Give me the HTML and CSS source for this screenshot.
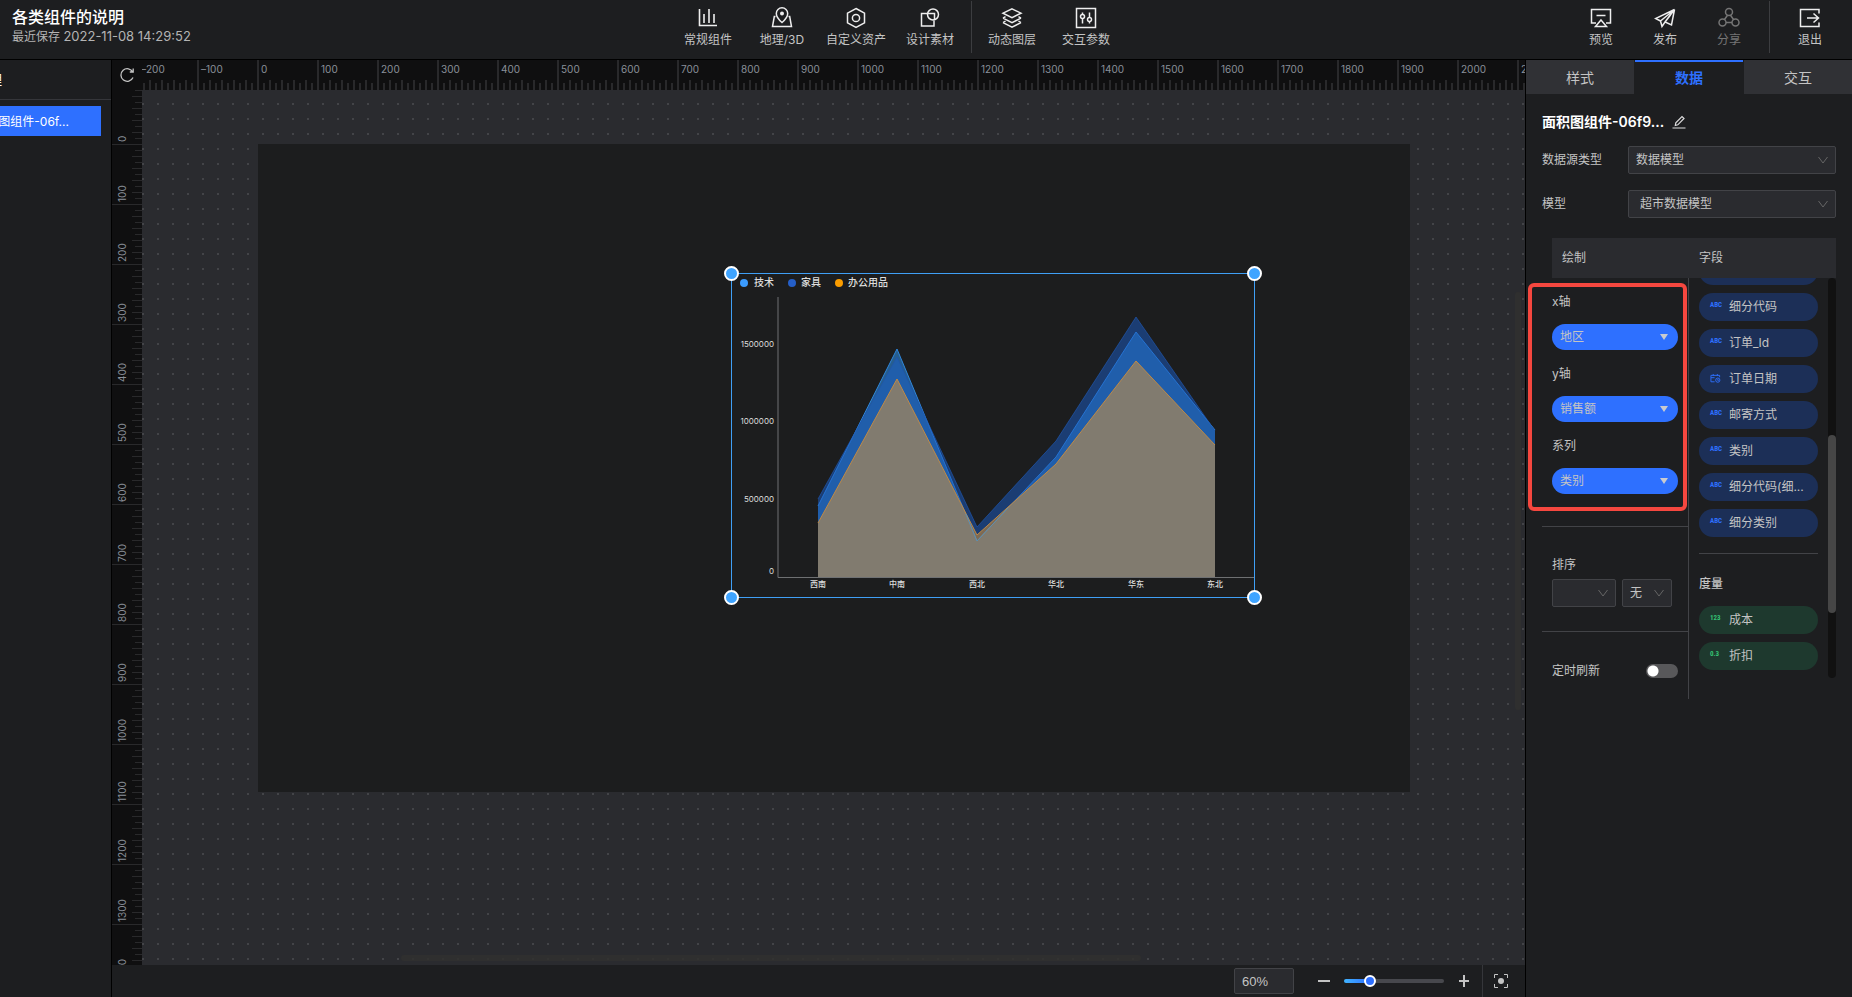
FILE: index.html
```html
<!DOCTYPE html>
<html lang="zh-CN">
<head>
<meta charset="utf-8">
<title>各类组件的说明</title>
<link rel="stylesheet" href="styles.css">
</head>
<body>
<header class="topbar">
  <div class="doc">
    <h1 class="doc-title">各类组件的说明</h1>
    <p class="doc-saved">最近保存 <time>2022-11-08 14:29:52</time></p>
  </div>
  <nav class="tools">
    <button class="tool"><svg viewBox="0 0 22 22"><path d="M2.500 2v16.500h17.500M7 7v9M12 2v14M17 7v9" stroke-width="1.600"/></svg>常规组件</button>
    <button class="tool"><svg viewBox="0 0 22 22"><path d="M4.500 9.500H3.300L1.500 19.500h19l-1.800-10h-1.200"/><path d="M11 15.500C7.500 12.500 5.300 9.500 5.300 6.500a5.700 5.700 0 0 1 11.400 0c0 3-2.200 6-5.700 9z"/><circle cx="11" cy="6.500" r="2" fill="currentColor" stroke="none"/></svg>地理/3D</button>
    <button class="tool"><svg viewBox="0 0 22 22"><path d="M11 1.500l8.500 4.700v9.600L11 20.500l-8.500-4.700V6.200z"/><circle cx="11" cy="11" r="3.600"/></svg>自定义资产</button>
    <button class="tool"><svg viewBox="0 0 22 22"><path d="M8 6.500H2.500v12.500h12.500v-5.500M8 6.500h7.500V13"/><circle cx="14" cy="7.500" r="5.500"/></svg>设计素材</button>
    <span class="divider"></span>
    <button class="tool"><svg viewBox="0 0 22 22"><path d="M11 1.800l9 4.400-9 4.400-9-4.400zM2 11.200l9 4.400 9-4.400M2 15.700l9 4.400 9-4.400M2 11.200l2.500-1.500M20 11.200l-2.500-1.500M2 15.700l2.500-1.500M20 15.700l-2.500-1.500"/></svg>动态图层</button>
    <button class="tool"><svg viewBox="0 0 22 22"><path d="M1.500 1.500h19v19h-19zM7.500 5.500v2M7.500 11.500v5M14.500 5.500v5M14.500 14.500v2"/><circle cx="7.500" cy="9.500" r="2"/><circle cx="14.500" cy="12.500" r="2"/></svg>交互参数</button>
  </nav>
  <nav class="actions">
    <button class="tool"><svg viewBox="0 0 22 22"><path d="M6 16H1.500V2.500h19V16H16M6.500 8.500h9"/><path d="M11 13l5.500 6.500h-11z"/></svg>预览</button>
    <button class="tool"><svg viewBox="0 0 22 22"><path d="M20.500 2.500L1.500 11.500l5 2.500M20.500 2.500L17.500 18l-6.500-3zM20 3L6.500 14l1.500 5.500 3-4.500 5.500-7"/></svg>发布</button>
    <button class="tool off"><svg viewBox="0 0 22 22"><circle cx="11" cy="5" r="3.500"/><circle cx="4.500" cy="15.500" r="3.500"/><circle cx="17.500" cy="15.500" r="3.500"/><path d="M9.500 8.300L6.500 12.500M12.500 8.300l3 4.200M8 15.500h6"/></svg>分享</button>
    <span class="divider"></span>
    <button class="tool"><svg viewBox="0 0 22 22"><path d="M20 6.500V2.500H1.500v17H20v-4M8 11h12M14.500 6.500L19.500 11l-5 4.500"/></svg>退出</button>
  </nav>
</header>

<div class="workspace">
  <aside class="layers">
    <h2 class="layers-title"><span>图层管理</span></h2>
    <button class="layer"><span>面积图组件-06f...</span></button>
  </aside>

  <main class="editor">
    <div class="board">
      <button class="reset" aria-label="重置"><svg viewBox="0 0 16 16"><path d="M13.800 5A6.300 6.300 0 1 0 14 10.500M14.200 1.500V5h-3.400"/></svg></button>
      <div class="ruler-x"><div class="marks-x"><span>–200</span><span>–100</span><span>0</span><span>100</span><span>200</span><span>300</span><span>400</span><span>500</span><span>600</span><span>700</span><span>800</span><span>900</span><span>1000</span><span>1100</span><span>1200</span><span>1300</span><span>1400</span><span>1500</span><span>1600</span><span>1700</span><span>1800</span><span>1900</span><span>2000</span><span>2100</span></div></div>
      <div class="ruler-y"><div class="marks-y"><span>0</span><span>100</span><span>200</span><span>300</span><span>400</span><span>500</span><span>600</span><span>700</span><span>800</span><span>900</span><span>1000</span><span>1100</span><span>1200</span><span>1300</span><span>1400</span></div></div>
      <div class="canvas">
        <div class="stage">
          <div class="selection">
            <svg class="chart" viewBox="0 0 524 325">
              <g class="legend">
                <circle cx="13" cy="10" r="4" fill="#3b9cff"/><text x="23" y="13">技术</text>
                <circle cx="61" cy="10" r="4" fill="#255fc8"/><text x="70" y="13">家具</text>
                <circle cx="108" cy="10" r="4" fill="#fa9d00"/><text x="117" y="13">办公用品</text>
              </g>
              <path class="axis" d="M47 24V304.500H524"/>
              <g class="ylabels"><text x="43" y="74">1500000</text><text x="43" y="151">1000000</text><text x="43" y="229">500000</text><text x="43" y="301">0</text></g>
              <path class="tech-fill" d="M87 233L166 76L246 268L325 184L405 59L484 157V304H87z"/>
              <path class="tech-line" d="M87 233L166 76L246 268L325 184L405 59L484 157"/>
              <path class="home-fill" d="M87 226L166 84L246 254L325 168L405 44L484 158V304H87z"/>
              <path class="home-line" d="M87 226L166 84L246 254L325 168L405 44L484 158"/>
              <path class="office-fill" d="M87 250L166 106L246 262L325 191L405 88L484 172V304H87z"/>
              <path class="office-line" d="M87 250L166 106L246 262L325 191L405 88L484 172"/>
              <path class="tech-dip" d="M235 241L246 268L277 235"/>
              <g class="xlabels"><text x="87" y="314">西南</text><text x="166" y="314">中南</text><text x="246" y="314">西北</text><text x="325" y="314">华北</text><text x="405" y="314">华东</text><text x="484" y="314">东北</text></g>
            </svg>
            <i class="handle nw"></i><i class="handle ne"></i><i class="handle sw"></i><i class="handle se"></i>
          </div>
        </div>
        <i class="bar-x"></i><i class="bar-y"></i>
      </div>
    </div>
    <footer class="zoombar">
      <input class="zoom-value" type="text" value="60%" aria-label="缩放比例">
      <button class="step" aria-label="缩小"><svg viewBox="0 0 14 14"><path d="M1 7h12"/></svg></button>
      <input class="zoom-range" type="range" min="0" max="100" value="23" aria-label="缩放">
      <button class="step plus" aria-label="放大"><svg viewBox="0 0 14 14"><path d="M2 7h10M7 1v12"/></svg></button>
      <button class="fit" aria-label="适应画布"><svg viewBox="0 0 16 16"><path d="M1.500 5V1.500H5M11 1.500h3.500V5M14.500 11v3.500H11M5 14.500H1.500V11"/><circle cx="8" cy="8" r="3" fill="currentColor" stroke="none"/></svg></button>
    </footer>
  </main>

  <aside class="panel">
    <div class="tabs" role="tablist">
      <button class="tab" role="tab">样式</button>
      <button class="tab active" role="tab" aria-selected="true">数据</button>
      <button class="tab" role="tab">交互</button>
    </div>
    <div class="panel-body">
      <div class="name"><h2>面积图组件-06f9...</h2><button class="edit" aria-label="编辑"><svg viewBox="0 0 14 14"><path d="M.5 13h13M3.300 10.500l.5-2.700L10 1.500l2 2L5.800 9.800z"/></svg></button></div>
      <div class="row"><label for="src">数据源类型</label><select id="src" class="select"><option>数据模型</option></select></div>
      <div class="row"><label for="model">模型</label><select id="model" class="select indent"><option>超市数据模型</option></select></div>
      <div class="mapping">
        <div class="mapping-head"><span>绘制</span><span>字段</span></div>
        <div class="mapping-cols">
          <div class="draw">
            <div class="axes">
              <label for="fx">x轴</label><select id="fx" class="pick"><option>地区</option></select>
              <label for="fy">y轴</label><select id="fy" class="pick"><option>销售额</option></select>
              <label for="fs">系列</label><select id="fs" class="pick"><option>类别</option></select>
            </div>
            <div class="sort">
              <span>排序</span>
              <div class="sort-row"><select class="select by" aria-label="排序字段"><option></option></select><select class="select dir" aria-label="排序方式"><option>无</option></select></div>
            </div>
            <div class="refresh"><label for="auto">定时刷新</label><input id="auto" class="switch" type="checkbox" role="switch"></div>
          </div>
          <div class="fields">
            <ul class="dims">
              <li class="field"></li>
              <li class="field"><b>ABC</b>细分代码</li>
              <li class="field"><b>ABC</b>订单_Id</li>
              <li class="field"><svg viewBox="0 0 12 10"><path d="M5 8.500H1V1.500h9.500v2M1 4h4M3.500 0v2M8 0v2"/><circle cx="8.500" cy="6.700" r="2.300"/><path d="M8.500 5.500v1.500h1"/></svg>订单日期</li>
              <li class="field"><b>ABC</b>邮寄方式</li>
              <li class="field"><b>ABC</b>类别</li>
              <li class="field"><b>ABC</b>细分代码(细...</li>
              <li class="field"><b>ABC</b>细分类别</li>
            </ul>
            <h3>度量</h3>
            <ul class="measures">
              <li class="field"><b>123</b>成本</li>
              <li class="field"><b>0.3</b>折扣</li>
            </ul>
          </div>
          <div class="scroll"><i></i></div>
        </div>
      </div>
    </div>
  </aside>
</div>
</body>
</html>
```
FILE: styles.css
```css
* { box-sizing: border-box; }
html, body { height: 100%; margin: 0; }
body {
  display: flex;
  flex-direction: column;
  overflow: hidden;
  background: #1d1e20;
  color: #c4c4c4;
  font: 12px/18px "Inter", "Noto Sans CJK SC", sans-serif;
}
h1, h2, h3, p, ul { margin: 0; padding: 0; font-weight: 400; list-style: none; }
button, input, select { font: inherit; color: inherit; margin: 0; padding: 0; border: 0; background: none; border-radius: 0; }
select { appearance: none; }
svg { display: block; fill: none; stroke: currentColor; }

.topbar {
  position: relative;
  display: flex;
  justify-content: space-between;
  flex: none;
  height: 60px;
  border-bottom: 1px solid #000;
}
.doc { padding: 7px 12px; }
.doc-title { color: #fff; font-size: 16px; line-height: 20px; font-weight: 500; }
.doc-saved { color: #b4b4b4; }
.doc-saved time { font-size: 13px; }
.tools, .actions { display: flex; }
.tools { position: absolute; left: 50%; transform: translateX(-50%); margin-left: -29px; }
.tool {
  display: flex;
  flex-direction: column;
  align-items: center;
  justify-content: flex-start;
  gap: 1px;
  width: 74px;
  padding-top: 7px;
  white-space: nowrap;
  line-height: 20px;
}
.tool svg { width: 22px; height: 22px; color: #eee; stroke-width: 1.5; }
.actions .tool { width: 64px; }
.tool.off, .tool.off svg { color: #757575; }
.divider { width: 1px; height: 52px; margin-top: 1px; background: #3c3d40; }
.tools .divider { margin-right: 3px; margin-left: 4px; }
.actions .divider { margin-left: 8px; margin-right: 8px; }
.actions { padding-right: 10px; }

.workspace { flex: 1; display: flex; min-height: 0; }
.layers { flex: none; width: 112px; border-right: 1px solid #000; overflow: hidden; }
.layers-title { display: flex; justify-content: flex-end; height: 40px; padding: 11px 109px 0 0; border-bottom: 1px solid #35363a; font-size: 14px; color: #fff; white-space: nowrap; }
.layer { display: flex; justify-content: flex-end; align-items: center; width: 101px; height: 30px; margin-top: 6px; padding: 2px 32px 0 0; background: #2e70ff; color: #fff; white-space: nowrap; }

.editor { flex: 1; display: flex; flex-direction: column; min-width: 0; }
.board { flex: 1; min-height: 0; display: grid; grid-template: 30px minmax(0, 1fr) / 30px minmax(0, 1fr); background: #0f0f10; overflow: hidden; }
.reset { display: grid; place-items: center; color: #c4c4c4; }
.reset svg { width: 16px; height: 16px; stroke-width: 1.3; }
.ruler-x, .ruler-y { overflow: hidden; color: #8a8f99; font: 10px/12px "Inter", sans-serif; }
.marks-x {
  display: flex;
  width: 1440px;
  height: 30px;
  margin-left: -5px;
  background:
    repeating-linear-gradient(90deg, #29292b 0 2px, transparent 2px 60px),
    repeating-linear-gradient(90deg, #29292b 0 2px, transparent 2px 12px) 0 20px no-repeat,
    repeating-linear-gradient(90deg, #29292b 0 2px, transparent 2px 6px) 0 23px no-repeat;
}
.marks-x span { flex: none; width: 60px; padding: 3px 0 0 4px; }
.marks-y {
  height: 894px;
  width: 30px;
  display: flex;
  flex-direction: column;
  background:
    repeating-linear-gradient(#29292b 0 1px, transparent 1px 60px) 0 -6px no-repeat,
    repeating-linear-gradient(#29292b 0 1px, transparent 1px 12px) 20px -6px no-repeat,
    repeating-linear-gradient(#29292b 0 1px, transparent 1px 6px) 23px -6px no-repeat;
  background-size: 100% 920px;
}
.marks-y span { flex: none; display: flex; align-items: flex-start; width: 30px; height: 60px; padding: 2px 4px 0 0; writing-mode: vertical-rl; transform: rotate(180deg); }
.marks-y span:first-child { height: 54px; }

.canvas { position: relative; overflow: hidden; padding: 54px 0 0 116px; background: conic-gradient(at 2px 2px, #2a2b2f 270deg, #434448 0) 0 13px / 15px 15px; }
.stage { position: relative; width: 1152px; height: 648px; background: #1c1d1e; }
.bar-x, .bar-y { position: absolute; border-radius: 3px; background: #30302fd9; }
.bar-x { left: 259px; right: 384px; bottom: 4px; height: 6px; }
.bar-y { top: 202px; bottom: 255px; right: 4px; width: 6px; }
.selection { position: absolute; left: 473px; top: 129px; width: 524px; height: 325px; box-shadow: 0 0 0 1px #3f9ff5; }
.selection { outline: 1px solid #3f9ff5; outline-offset: -1px; box-shadow: none; }
.chart { width: 100%; height: 100%; font: 8px "Inter", "Noto Sans CJK SC", sans-serif; }
.chart text { fill: #ddd; stroke: none; }
.legend circle { stroke: none; }
.legend text { font-size: 10px; font-weight: 500; }
.ylabels { text-anchor: end; }
.xlabels { text-anchor: middle; font-weight: 500; }
.axis { stroke: #6e7072; }
.tech-fill { fill: #309fff; fill-opacity: .5; stroke: none; }
.home-fill { fill: #1a5dc8; fill-opacity: .5; stroke: none; }
.office-fill { fill: #e29834; fill-opacity: .5; stroke: none; }
.tech-line { stroke: #2f86dc; }
.tech-dip { stroke: #5a8fb4; }
.home-line { stroke: #1f56ad; stroke-opacity: .7; }
.office-line { stroke: #c08a45; }
.handle { position: absolute; width: 15px; height: 15px; border: 2px solid #fff; border-radius: 50%; background: #3fa4ff; }
.nw { left: -7px; top: -7px; }
.ne { right: -7px; top: -7px; }
.sw { left: -7px; bottom: -7px; }
.se { right: -7px; bottom: -7px; }

.zoombar { flex: none; display: flex; align-items: center; justify-content: flex-end; height: 32px; }
.zoom-value { width: 60px; height: 26px; margin-right: 23px; padding: 0 7px; border: 1px solid #424347; border-radius: 2px; background: #2a2b2f; font: 13px "Liberation Sans", sans-serif; }
.step { width: 14px; height: 14px; stroke-width: 2; }
.step svg { width: 14px; }
.zoom-range { appearance: none; width: 100px; height: 14px; margin: 0 13px; }
.zoom-range::-webkit-slider-runnable-track { height: 4px; border-radius: 2px; background: linear-gradient(90deg, #41b4ff, #2e70ff 26%, #47484d 26%); }
.zoom-range::-webkit-slider-thumb { appearance: none; width: 12px; height: 12px; margin-top: -4px; border: 2px solid #fff; border-radius: 50%; background: #2e70ff; }
.plus { margin-right: 11px; }
.fit { display: grid; place-items: center; width: 43px; height: 32px; padding-right: 6px; border-left: 1px solid #35363a; }
.fit svg { width: 16px; }

.panel { flex: none; width: 327px; border-left: 1px solid #000; }
.tabs { display: flex; gap: 1px; }
.tab { flex: 1; height: 34px; background: #303135; font-size: 14px; border-top: 2px solid transparent; }
.tab.active { background: none; border-color: #2e70ff; color: #2e70ff; font-weight: 700; }
.panel-body { padding: 16px 16px 0; }
.name { display: flex; align-items: center; gap: 8px; height: 24px; }
.name h2 { color: #fff; font-size: 14px; font-weight: 600; }
.edit { color: #ddd; }
.edit svg { width: 14px; stroke-width: 1.2; }
.row { display: flex; align-items: center; margin-top: 12px; }
.row + .row { margin-top: 16px; }
.row label { width: 86px; }
.row .select { flex: 1; }
.select {
  height: 28px;
  padding: 0 7px;
  border: 1px solid #424347;
  border-radius: 2px;
  background: #2a2b2f url("data:image/svg+xml,%3Csvg xmlns='http://www.w3.org/2000/svg' viewBox='0 0 10 8'%3E%3Cpath d='M.5 1L5 7l4.500-6' fill='none' stroke='%23666'/%3E%3C/svg%3E") right 7px center / 10px 8px no-repeat;
}
.select.indent { padding-left: 11px; }
.mapping { margin: 20px 0 0; }
.mapping-head { display: flex; align-items: center; height: 40px; margin-left: 10px; padding-left: 10px; background: #2a2b2f; }
.mapping-head span:first-child { width: 137px; }
.mapping-cols { display: flex; height: 421px; }
.draw { width: 147px; flex: none; border-right: 1px solid #424347; }
.axes { position: relative; display: flex; flex-direction: column; width: 159px; height: 228px; margin: 5px 0 0 -14px; padding: 6px 5px 0 20px; border: 4px solid #f5473f; border-radius: 6px; }
.pick {
  flex: none;
  height: 26px;
  margin: 13px 0 15px;
  padding: 0 8px;
  border-radius: 13px;
  background: #2e70ff url("data:image/svg+xml,%3Csvg xmlns='http://www.w3.org/2000/svg' viewBox='0 0 8 6'%3E%3Cpath d='M0 0h8L4 6z' fill='%23c9cbd0'/%3E%3C/svg%3E") right 10px center / 8px 6px no-repeat;
}
.sort { margin-top: 15px; padding: 29px 0 24px 10px; border-top: 1px solid #424347; border-bottom: 1px solid #424347; }
.sort-row { display: flex; gap: 6px; margin-top: 5px; }
.by { width: 64px; }
.dir { width: 50px; }
.refresh { display: flex; justify-content: space-between; align-items: center; padding: 30px 10px 0; }
.switch { appearance: none; width: 32px; height: 14px; border-radius: 7px; background: radial-gradient(circle at 7px 7px, #fff 5px, transparent 6px) #58585a; }
.fields { width: 119px; margin-left: 10px; height: 400px; overflow: hidden; }
.field { display: flex; align-items: center; height: 28px; margin-bottom: 8px; padding-left: 11px; border-radius: 14px; background: #1c2f57; white-space: nowrap; }
.field:first-child { margin-top: -21px; }
.field b { width: 19px; padding-bottom: 4px; color: #2e70ff; font: 700 7px/12px "Liberation Sans Narrow", "Roboto Condensed", "Roboto", sans-serif; }
.field svg { width: 11px; margin-right: 8px; color: #2e70ff; }
.dims { padding-bottom: 8px; border-bottom: 1px solid #424347; }
.fields h3 { margin: 21px 0 13px; font-size: 12px; font-weight: 500; }
.measures .field { margin-top: 0; background: #1e392e; }
.measures b { color: #35c274; }
.scroll { width: 8px; height: 400px; margin-left: auto; padding-top: 157px; border-radius: 4px; background: #111; }
.scroll i { display: block; height: 178px; border-radius: 4px; background: #464646; }
```
